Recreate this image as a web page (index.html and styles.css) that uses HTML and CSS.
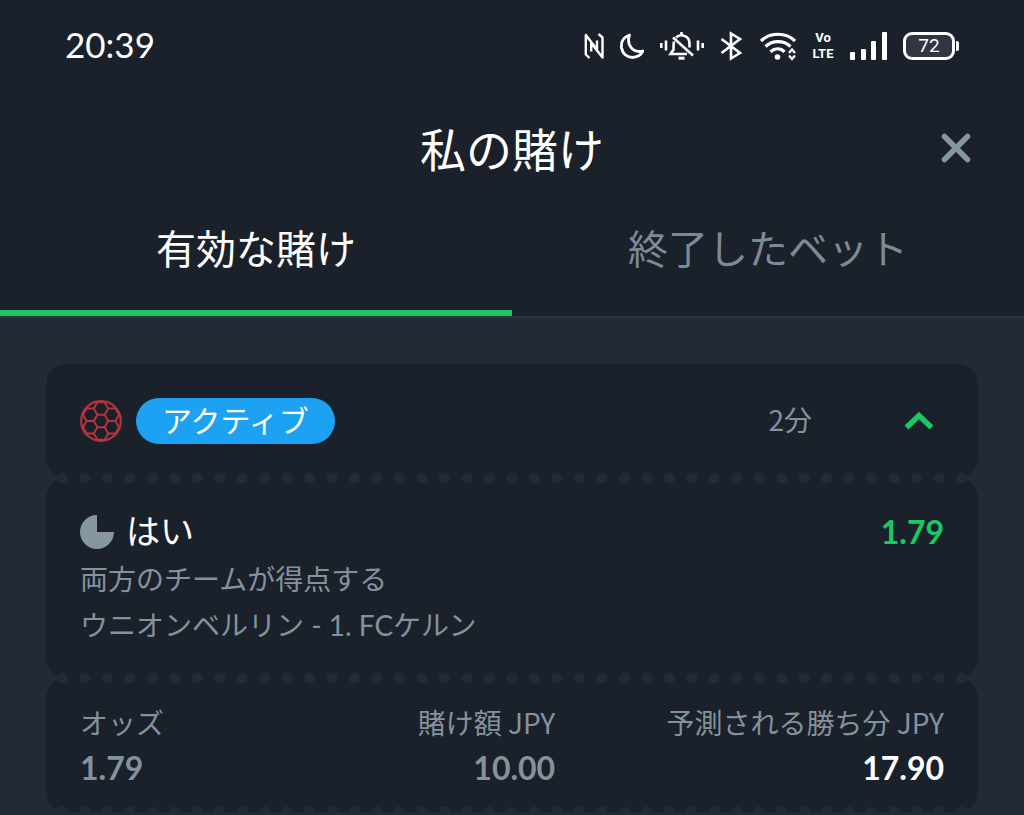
FILE: index.html
```html
<!DOCTYPE html>
<html lang="ja">
<head>
    <meta charset="UTF-8">
    <meta name="viewport" content="width=device-width, initial-scale=1.0">
    <title>私の賭け</title>
    <link rel="stylesheet" href="styles.css">
</head>
<body>

    <header class="top">
        <div class="status-bar">
            <time class="clock">20:39</time>
            <div class="status-icons">
                <svg width="20" height="30" viewBox="0 0 20 30" fill="none" stroke="#fff" stroke-width="2.400" stroke-linejoin="round">
                    <path d="M5.500 27L1.800 23.500V4L13 18.500V9.500M14.500 3L18.500 6.500V26.500L7.200 12V20.500"/>
                </svg>
                <svg width="24" height="30" viewBox="0 0 24 30" fill="none" stroke="#fff" stroke-width="2.8" stroke-linejoin="round">
                    <path d="M9.500 4C3.500 6 1 11 1.500 16.500c.8 6 5.500 10 11 10 5 0 8.500-2.500 10.500-6.500C13 22.500 6 14 9.500 4z"/>
                </svg>
                <svg width="44" height="30" viewBox="0 0 44 30" fill="none" stroke="#fff" stroke-width="2.600">
                    <path d="M1.300 12v5M6 9.500v10M38 9.500v10M42.700 12v5"/>
                    <path d="M21.500 1v3M16 6.500c2-2 4.500-2.500 7-2 4 .8 6.500 4 6.500 8v4M14 10.500c-.6 2-.5 5-.5 8L10.500 23H27M13 6.500l20 18"/>
                    <path d="M18.500 27.200h6" stroke-width="3"/>
                </svg>
                <svg width="24" height="30" viewBox="0 0 24 30" fill="none" stroke="#fff" stroke-width="2.600">
                    <path d="M1.500 8L20 22l-9 5.500V2.500L20 8 1.500 22"/>
                </svg>
                <svg width="36" height="30" viewBox="0 0 36 30" fill="none" stroke="#fff" stroke-width="3.200">
                    <path d="M1 10c9-9 25-9 34 0M5.500 15.500c7-6.500 18-6.500 25 0M10.500 20.800c4.500-4 10-4 14 0"/>
                    <circle cx="17.500" cy="26" r="2.800" fill="#fff" stroke="none"/>
                    <path d="M29 22l3-3.500 3 3.500M29 24.500l3 3.500 3-3.500" stroke-width="2.200"/>
                </svg>
                <span class="volte">Vo<br>LTE</span>
                <svg width="37" height="30" viewBox="0 0 37 30" fill="#fff">
                    <rect y="21" width="5" height="8" rx="1"/>
                    <rect x="11" y="18" width="5" height="11" rx="1"/>
                    <rect x="21" y="10" width="5" height="19" rx="1"/>
                    <rect x="32" y="1" width="5" height="28" rx="1"/>
                </svg>
                <span class="battery">72</span>
            </div>
        </div>

        <div class="title-bar">
            <h1>私の賭け</h1>
            <button class="close" type="button" aria-label="閉じる">
                <svg width="30" height="30" viewBox="0 0 30 30" fill="none" stroke="#8797a2" stroke-width="5.500" stroke-linecap="round">
                    <path d="M3.500 3.500l23 23M26.500 3.500l-23 23"/>
                </svg>
            </button>
        </div>

        <div class="tabs" role="tablist">
            <button class="tab active" type="button" role="tab" aria-selected="true">有効な賭け</button>
            <button class="tab" type="button" role="tab" aria-selected="false">終了したベット</button>
        </div>
    </header>

    <main class="bets">
        <section class="card card-head">
            <svg width="42" height="42" viewBox="-21 -21 42 42" fill="none" stroke="#b8343c" stroke-width="1.900">
                <circle r="19.800" stroke-width="2.200"/>
                <path d="M-7.200 0L-3.600-6.200H3.600L7.200 0 3.600 6.200H-3.600z"/>
                <path d="M-3.600-6.200L-7.200-12.500-3.600-18.700H3.600L7.200-12.500 3.600-6.200M-3.600 6.200L-7.200 12.500-3.600 18.700H3.600L7.200 12.500 3.600 6.200"/>
                <path d="M7.200 0H14.400L18-6.200 14.400-12.500H7.200M14.400 0L18 6.200 14.400 12.500H7.200M-7.200 0H-14.400L-18-6.200-14.400-12.500H-7.200M-14.400 0L-18 6.200-14.400 12.500H-7.200"/>
            </svg>
            <span class="badge">アクティブ</span>
            <span class="minutes">2分</span>
            <button class="toggle" type="button" aria-label="折りたたむ">
                <svg width="30" height="20" viewBox="0 0 30 20" fill="none" stroke="#17c964" stroke-width="5.500">
                    <path d="M2.500 16.500L15 4.500l12.500 12"/>
                </svg>
            </button>
        </section>

        <section class="card card-pick">
            <div class="pick">
                <svg width="34" height="34" viewBox="0 0 34 34" fill="#8797a2">
                    <path d="M17 0A17 17 0 1 0 34 17H17z"/>
                </svg>
                <h2>はい</h2>
                <span class="pick-odds">1.79</span>
            </div>
            <p>両方のチームが得点する</p>
            <p>ウニオンベルリン - 1. FCケルン</p>
        </section>

        <dl class="card card-totals">
            <div>
                <dt>オッズ</dt>
                <dd>1.79</dd>
            </div>
            <div>
                <dt>賭け額 JPY</dt>
                <dd>10.00</dd>
            </div>
            <div>
                <dt>予測される勝ち分 JPY</dt>
                <dd class="win">17.90</dd>
            </div>
        </dl>
    </main>

</body>
</html>
```
FILE: styles.css
```css
* {
    box-sizing: border-box;
    margin: 0;
    padding: 0;
}

body {
    font-family: "Noto Sans CJK JP", sans-serif;
    background: #242a34;
    color: #fff;
    min-height: 100vh;
}

button {
    font: inherit;
    color: inherit;
    background: none;
    border: none;
    cursor: pointer;
}

svg {
    display: block;
    flex-shrink: 0;
}

.top {
    background: #1b212b;
    border-bottom: 2px solid #303641;
}

/* Phone status bar */
.status-bar {
    display: flex;
    justify-content: space-between;
    align-items: center;
    height: 92px;
    padding: 0 65px;
}

.clock {
    padding-bottom: 4px;
    font-family: Lato, sans-serif;
    font-size: 35px;
}

.status-icons {
    display: flex;
    align-items: center;
    gap: 16px;
}

.volte {
    width: 22px;
    font-family: Roboto, sans-serif;
    font-size: 13px;
    font-weight: 700;
    line-height: 16px;
    text-align: center;
}

.battery {
    position: relative;
    width: 52px;
    height: 28px;
    margin-right: 4px;
    border: 3px solid #fff;
    border-radius: 9px;
    background: #303741;
    font-family: Roboto, sans-serif;
    font-size: 19px;
    line-height: 22px;
    text-align: center;
}

.battery::after {
    content: "";
    position: absolute;
    top: 6px;
    right: -7px;
    width: 3px;
    height: 10px;
    border-radius: 0 2px 2px 0;
    background: #fff;
}

/* Title and tabs */
.title-bar {
    display: grid;
    grid-template-columns: 1fr auto 1fr;
    align-items: center;
    padding: 23px 46px 7px;
}

.title-bar h1 {
    grid-column: 2;
    padding-bottom: 2px;
    font-size: 46px;
    font-weight: 400;
    line-height: 64px;
}

.close {
    justify-self: end;
    padding: 7px;
}

.tabs {
    display: flex;
}

.tab {
    flex: 1;
    height: 128px;
    padding-bottom: 4px;
    border-bottom: 6px solid transparent;
    color: #7c8a95;
    font-size: 40px;
}

.tab.active {
    border-color: #20c767;
    color: #fff;
}

/* Bet slip */
.bets {
    padding: 46px 46px 0;
    overflow: hidden;
}

.card {
    position: relative;
    padding: 30px 34px;
    border-radius: 20px;
    background: #1b212b;
    color: #84929d;
    font-size: 28px;
    line-height: 46px;
}

/* Perforation between two parts of the slip */
.card::after {
    content: "";
    position: absolute;
    z-index: 1;
    left: 5px;
    right: 5px;
    bottom: -6px;
    height: 12px;
    background: radial-gradient(circle, #242a34 5px, transparent 6px) 0 0 / calc(100% / 41) 12px;
}

.card-head {
    display: flex;
    align-items: center;
    padding: 34px;
}

.badge {
    margin-left: 14px;
    padding: 0 26px 4px;
    border-radius: 23px;
    background: #1da1f2;
    color: #fff;
    font-size: 30px;
    line-height: 42px;
}

.minutes {
    margin-left: auto;
    padding-bottom: 4px;
    line-height: 42px;
}

.toggle {
    margin-left: 82px;
    padding: 10px;
}

.pick {
    display: flex;
    align-items: center;
    height: 48px;
}

.pick h2 {
    margin-left: 12px;
    padding-bottom: 4px;
    color: #fff;
    font-size: 34px;
    font-weight: 400;
}

.pick-odds {
    margin-left: auto;
    color: #17c964;
}

.pick-odds,
.card-totals dd {
    font-family: Lato, sans-serif;
    font-size: 32px;
    font-weight: 700;
}

.card-pick p {
    font-family: Lato, "Noto Sans CJK JP", sans-serif;
}

.card-totals {
    display: grid;
    grid-template-columns: 11fr 11fr 18fr;
    padding: 21px 34px;
    text-align: right;
    white-space: nowrap;
}

.card-totals div:first-child {
    text-align: left;
}

.card-totals .win {
    color: #fff;
}
```
